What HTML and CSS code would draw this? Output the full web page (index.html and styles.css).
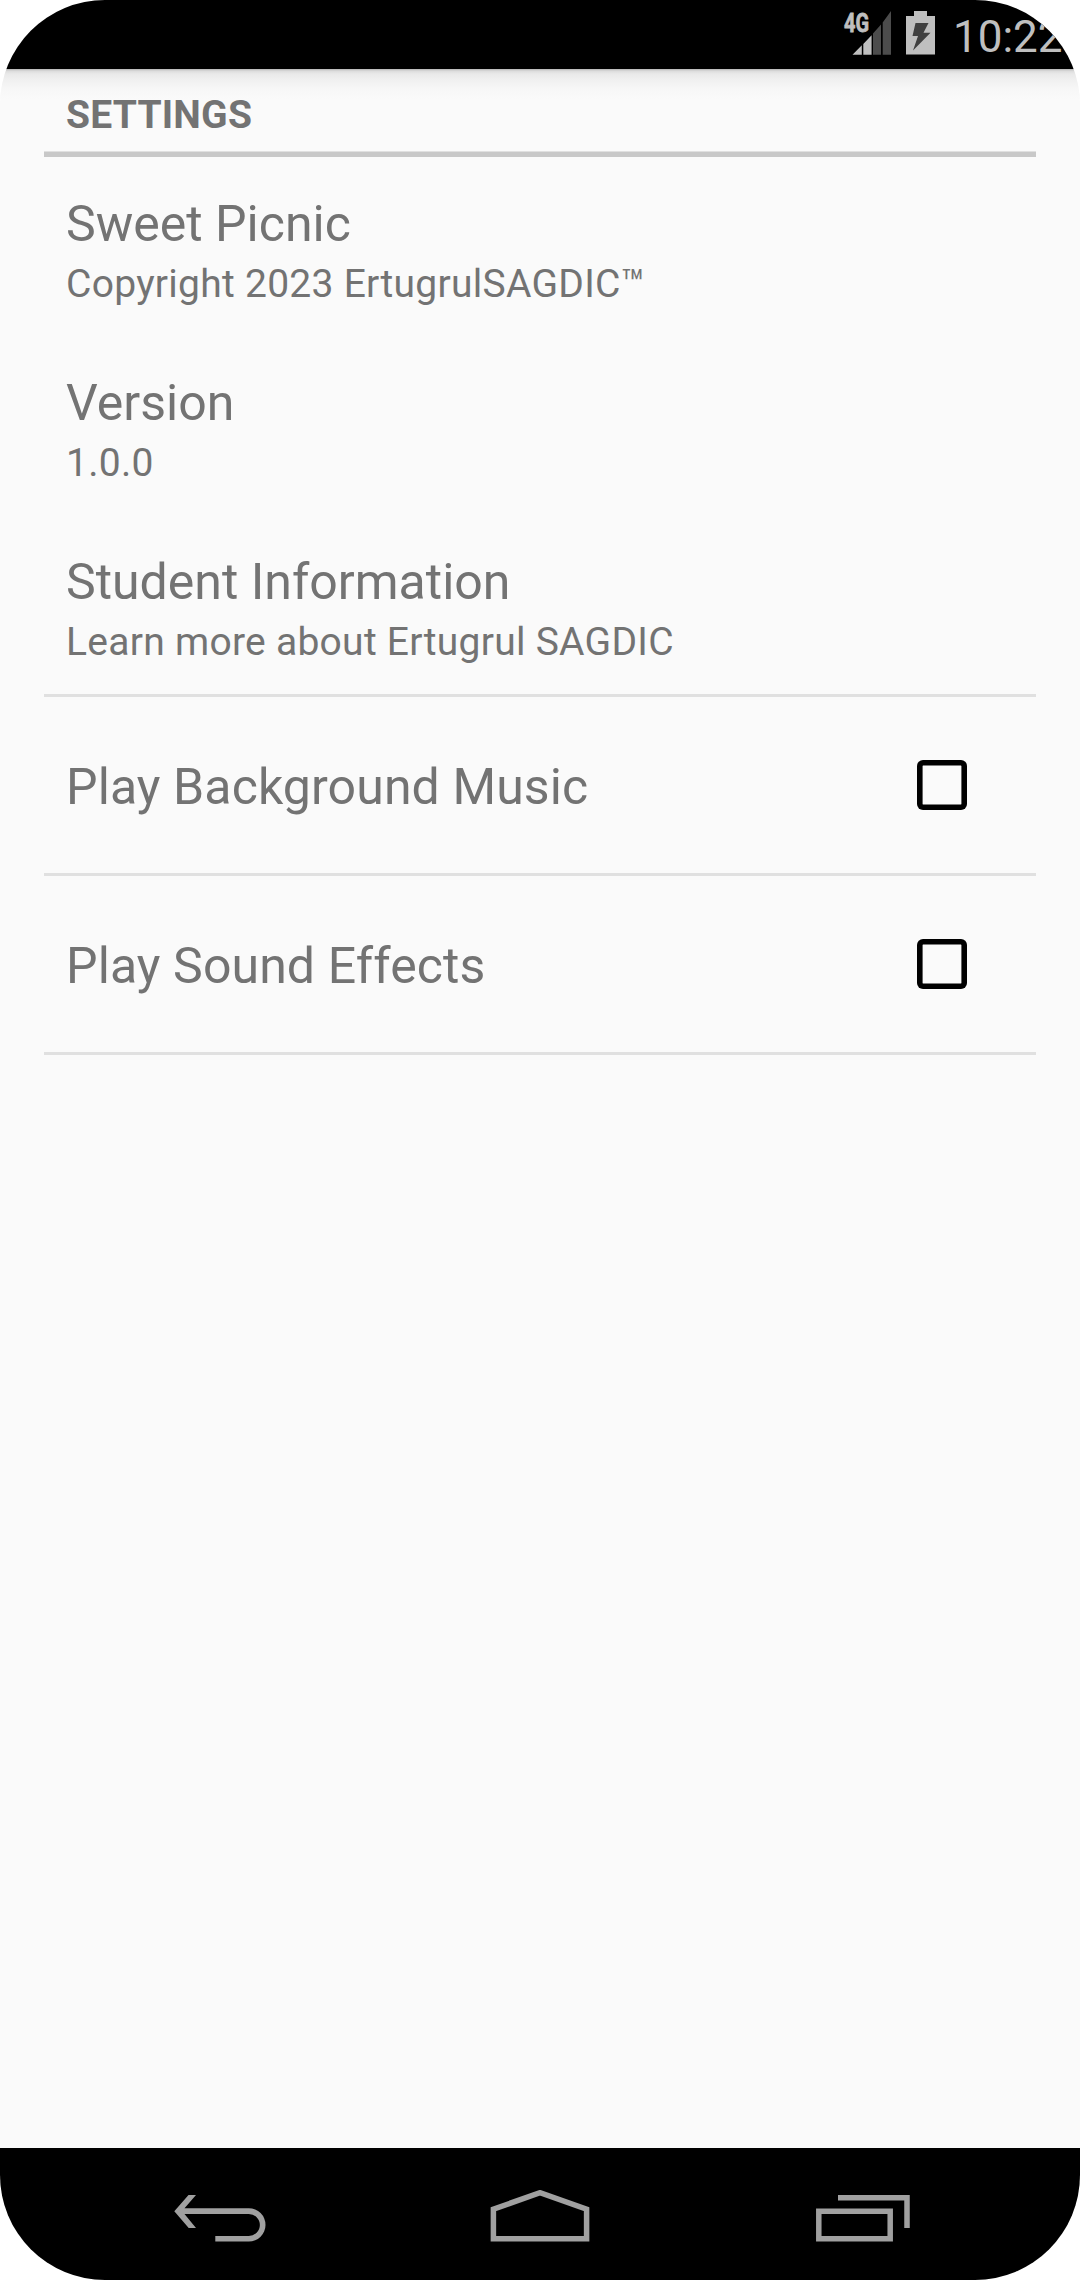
FILE: index.html
```html
<!DOCTYPE html>
<html lang="en">
<head>
<meta charset="utf-8">
<title>Settings</title>
<link rel="stylesheet" href="styles.css">
</head>
<body>
<div class="phone">
  <header class="status">
    <svg class="signal" width="50" height="45" viewBox="0 0 50 45">
      <path fill="#bfbfbf" d="M9.5 44.7 18.8 35.2V44.7ZM20.3 34 28.6 25.2V44.7H20.3Z"/>
      <path fill="#4c4c4c" d="M30 23.5 38 14.5V44.7H30ZM39.7 12.6 48 1V44.7H39.7Z"/>
      <text class="network" x="1" y="22" textLength="25" lengthAdjust="spacingAndGlyphs">4G</text>
    </svg>
    <svg class="battery" width="29" height="44" viewBox="0 0 29 44">
      <path fill="#bfbfbf" d="M8 0H21V5H29V43.5H0V5H8Z"/>
      <path fill="#404040" d="M9.5 12H22.5L17.5 21.7H24.5L7 39.5 12 25H6.5Z"/>
    </svg>
    <span class="clock">10:22</span>
  </header>
  <main class="content">
    <h1 class="category">SETTINGS</h1>
    <section class="row"><div class="title">Sweet Picnic</div><div class="summary">Copyright 2023 ErtugrulSAGDIC™</div></section>
    <section class="row"><div class="title">Version</div><div class="summary">1.0.0</div></section>
    <section class="row ruled"><div class="title">Student Information</div><div class="summary">Learn more about Ertugrul SAGDIC</div></section>
    <label class="row toggle ruled"><span class="title">Play Background Music</span><input class="box" type="checkbox"></label>
    <label class="row toggle ruled"><span class="title">Play Sound Effects</span><input class="box" type="checkbox"></label>
  </main>
  <nav class="nav">
    <svg width="94" height="56" viewBox="0 0 94 56">
      <path fill="#a0a0a0" d="M1.3 21.2 15.5 5H23L11.5 18.2H75.8a16.6 16.6 0 0 1 0 33.4H42.3V46H75.8a11 11 0 0 0 0-22.1H11.5L23 38H15.7Z"/>
    </svg>
    <svg class="home" width="100" height="56" viewBox="0 0 100 56">
      <path fill="none" stroke="#a0a0a0" stroke-width="5.5" d="M3.4 48.8V19.2L50 2.7 96.6 19.2V48.8Z"/>
    </svg>
    <svg width="94" height="56" viewBox="0 0 94 56">
      <path fill="none" stroke="#a0a0a0" stroke-width="5.5" d="M2.8 21.2H74.2V48.8H2.8ZM22 7.7H91V38"/>
    </svg>
  </nav>
</div>
</body>
</html>
```

FILE: styles.css
```css
* { box-sizing: border-box; }

body {
  margin: 0;
  background: #fff;
  font-family: Roboto, "Liberation Sans", sans-serif;
}

.phone {
  display: flex;
  flex-direction: column;
  width: 1080px;
  height: 2280px;
  overflow: hidden;
  border-radius: 105px;
  background: #fafafa;
}

.status {
  display: flex;
  flex: none;
  justify-content: flex-end;
  height: 69px;
  padding-right: 17px;
  background: #000;
  color: #bfbfbf;
}

.signal { margin: 10px 13px 0 0; }

.network {
  fill: #bfbfbf;
  stroke: #bfbfbf;
  stroke-width: 0.8px;
  font-size: 25px;
  font-weight: 700;
}

.battery { margin: 11px 18px 0 0; }

.clock {
  width: 110px;
  font-size: 44px;
  line-height: 75px;
}

.content {
  flex: 1;
  padding: 0 44px;
  background: linear-gradient(#b4b4b4 0, #dcdcdc 2px, #e9e9e9 5px, #f0f0f0 11px, #f7f7f7 20px, #fafafa 30px) no-repeat 0 0 / 100% 30px;
}

.category {
  height: 88px;
  margin: 0 0 3px;
  padding: 23px 22px 0;
  border-bottom: 5px solid #c8c8c8;
  box-shadow: inset 0 -1px #e0e0e0;
  color: #737373;
  font-size: 39px;
  font-weight: 700;
  letter-spacing: 0.2px;
  line-height: 46px;
}

.row {
  display: block;
  height: 179px;
  padding: 34px 22px 0;
  border-bottom: 3px solid transparent;
  color: #737373;
}

.ruled { border-bottom-color: #e0e0e0; }

.title {
  font-size: 50px;
  line-height: 60px;
}

.summary {
  font-size: 39px;
  letter-spacing: 0.27px;
  line-height: 60px;
}

.toggle {
  display: flex;
  align-items: center;
  justify-content: space-between;
  padding: 0 69px 0 22px;
}

.toggle .title {
  padding-top: 3px;
  letter-spacing: 0.1px;
}

.box {
  width: 50px;
  height: 50px;
  margin: 0;
  border-radius: 6px;
  box-shadow: inset 0 0 0 5.6px #000;
  appearance: none;
}

.nav {
  display: flex;
  flex: none;
  justify-content: space-between;
  height: 132px;
  padding: 42px 170px 0 173px;
  background: #000;
}

.home { margin-right: 3px; }
```
